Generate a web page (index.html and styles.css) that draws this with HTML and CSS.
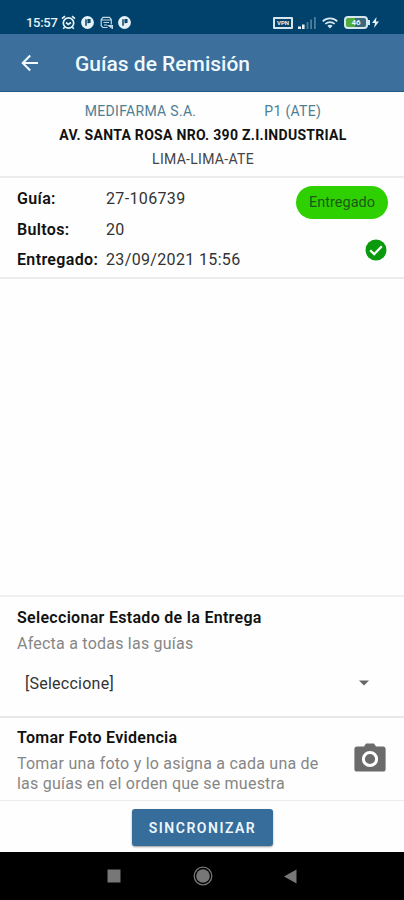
FILE: index.html
```html
<!DOCTYPE html>
<html lang="es">
<head>
    <meta charset="UTF-8">
    <meta name="viewport" content="width=device-width, initial-scale=1">
    <title>Guías de Remisión</title>
    <link rel="stylesheet" href="styles.css">
</head>
<body>
<div class="status-bar">
    <div class="status-left">
        <span class="clock">15:57</span>
        <svg class="alarm" width="15" height="15" viewBox="0 0 15 15" fill="none" stroke="#e4f1f6" stroke-width="1.7">
            <circle cx="7.5" cy="8" r="5.2"/>
            <path d="M5 7.5l2.3 2 2.7-2M1 3.6L4 1.2M14 3.6l-3-2.4M3.6 12.2l-1.4 1.6M11.4 12.2l1.4 1.6"/>
        </svg>
        <svg class="app-icon" width="13" height="13" viewBox="0 0 13 13">
            <circle cx="6.5" cy="6.5" r="6.4" fill="#e4f1f6"/>
            <path d="M5 3.2v6.6M7.2 3v4.2M7.2 3.8h1.6v2.4H7.2" fill="none" stroke="#0b4468" stroke-width="1.5"/>
        </svg>
        <svg class="sync-icon" width="13" height="13" viewBox="0 0 13 13" fill="none" stroke="#c3d8e3" stroke-width="1.2">
            <path d="M7.5 11.5H3L1.2 9.7V3.4L3 1.3h6.5l1.8 2.1v5M1.5 4h9.5M3.5 6.5h5.5M4 9h3"/>
            <path d="M8.5 9.5h4v3z" fill="#c3d8e3"/>
        </svg>
        <svg class="app-icon" width="13" height="13" viewBox="0 0 13 13">
            <circle cx="6.5" cy="6.5" r="6.4" fill="#e4f1f6"/>
            <path d="M5 3.2v6.6M7.2 3v4.2M7.2 3.8h1.6v2.4H7.2" fill="none" stroke="#0b4468" stroke-width="1.5"/>
        </svg>
    </div>
    <div class="status-right">
        <span class="vpn">VPN</span>
        <svg class="signal" width="19" height="12" viewBox="0 0 19 12">
            <path d="M0 9.5h3V12H0zM4 7.5h2.6V12H4z" fill="#e4f1f6"/>
            <path d="M8.6 5h1.8v7H8.6zM12.2 2.5H14V12h-1.8zM16 0h1.8v12H16z" fill="#4d7f9d"/>
        </svg>
        <svg class="wifi" width="16" height="12" viewBox="0 0 16 12" fill="none" stroke="#d5e6ee" stroke-width="1.7">
            <path d="M.7 4.3a10.5 10.5 0 0 1 14.6 0M3.3 7a6.8 6.8 0 0 1 9.4 0"/>
            <path d="M5.4 8.8a4 4 0 0 1 5.2 0L8 11.6z" fill="#d5e6ee" stroke="none"/>
        </svg>
        <div class="battery"><span>46</span></div>
        <svg class="bolt" width="7" height="11" viewBox="0 0 7 11">
            <path d="M4.5 0L0 6h3L2 11l5-6.5H4z" fill="#e4f1f6"/>
        </svg>
    </div>
</div>

<header>
    <svg class="back" width="18" height="18" viewBox="0 0 18 18" fill="none" stroke="#f2fafd" stroke-width="2">
        <path d="M17 9H2M9.2 1.5L1.7 9l7.5 7.5"/>
    </svg>
    <h1>Guías de Remisión</h1>
</header>

<main>
    <section class="client">
        <div class="client-name">
            <span>MEDIFARMA S.A.</span>
            <span>P1 (ATE)</span>
        </div>
        <div class="address">AV. SANTA ROSA NRO. 390 Z.I.INDUSTRIAL</div>
        <div class="district">LIMA-LIMA-ATE</div>
    </section>

    <section class="guide">
        <dl>
            <dt>Guía:</dt>
            <dd>27-106739</dd>
            <dt>Bultos:</dt>
            <dd>20</dd>
            <dt>Entregado:</dt>
            <dd>23/09/2021 15:56</dd>
        </dl>
        <div class="guide-state">
            <span class="badge">Entregado</span>
            <svg class="check" width="22" height="22" viewBox="0 0 22 22">
                <circle cx="11" cy="11" r="10.5" fill="#0a9a0c"/>
                <path d="M5.2 11.2l4 4 7.6-8" fill="none" stroke="#fff" stroke-width="2.3"/>
            </svg>
        </div>
    </section>

    <div class="space"></div>

    <section class="delivery">
        <h2>Seleccionar Estado de la Entrega</h2>
        <p>Afecta a todas las guías</p>
        <div class="select">
            <span>[Seleccione]</span>
            <svg width="10" height="6" viewBox="0 0 10 6"><path d="M0 .5h10L5 5.5z" fill="#666"/></svg>
        </div>
    </section>

    <section class="photo">
        <div class="photo-text">
            <h2>Tomar Foto Evidencia</h2>
            <p>Tomar una foto y lo asigna a cada una de<br>las guías en el orden que se muestra</p>
        </div>
        <svg class="camera" width="32" height="29" viewBox="0 0 32 29">
            <path d="M3 3.5h7L12 .5h8l2 3h7a2.6 2.6 0 0 1 2.6 2.6v19.8a2.6 2.6 0 0 1-2.6 2.6H3A2.6 2.6 0 0 1 .4 25.9V6.1A2.6 2.6 0 0 1 3 3.5z" fill="#6b6b6b"/>
            <circle cx="16" cy="16" r="6.6" fill="#6b6b6b" stroke="#fff" stroke-width="3"/>
        </svg>
    </section>

    <section class="actions">
        <button>SINCRONIZAR</button>
    </section>
</main>

<nav>
    <svg width="14" height="14" viewBox="0 0 14 14"><path d="M.5.5h13v13H.5z" fill="#777"/></svg>
    <svg width="20" height="20" viewBox="0 0 20 20">
        <circle cx="10" cy="10" r="8.8" fill="none" stroke="#777" stroke-width="1.3"/>
        <circle cx="10" cy="10" r="6.8" fill="#777"/>
    </svg>
    <svg width="13" height="15" viewBox="0 0 13 15"><path d="M0 7.5L12.5.5v14z" fill="#777"/></svg>
</nav>
</body>
</html>
```
FILE: styles.css
```css
body {
    font-family: Roboto, "Liberation Sans", sans-serif;
    margin: 0;
    height: 900px;
    display: flex;
    flex-direction: column;
    background-color: #fefefe;
    color: #111;
}

svg {
    flex: none;
    display: block;
}

.status-bar {
    box-sizing: border-box;
    height: 34px;
    padding: 11px 25px 0 26px;
    background-color: #00426b;
    color: #e4f1f6;
    display: flex;
    justify-content: space-between;
}

.status-left,
.status-right {
    display: flex;
    align-items: center;
    height: 23px;
}

.clock {
    font-size: 13px;
    font-weight: 500;
    letter-spacing: -0.3px;
    width: 35px;
    white-space: nowrap;
}

.app-icon {
    margin-left: 5px;
}

.sync-icon {
    margin-left: 6px;
}

.vpn {
    box-sizing: border-box;
    width: 20px;
    height: 12px;
    border: 2px solid #d5e6ee;
    border-radius: 1px;
    font-size: 6px;
    font-weight: 700;
    line-height: 8px;
    text-align: center;
}

.signal {
    margin-left: 5px;
}

.wifi {
    margin-left: 5px;
}

.battery {
    box-sizing: border-box;
    position: relative;
    width: 24px;
    height: 13px;
    margin-left: 6px;
    border: 2px solid #d5e6ee;
    border-radius: 4px;
    background: linear-gradient(to right, #4faa3f 45%, #386a7c 45%);
    font-size: 8px;
    font-weight: 700;
    line-height: 9px;
    text-align: center;
}

.battery::after {
    content: "";
    position: absolute;
    right: -4px;
    top: 2px;
    width: 2px;
    height: 5px;
    background-color: #d5e6ee;
}

.bolt {
    margin-left: 4px;
}

header {
    box-sizing: border-box;
    height: 58px;
    padding-left: 21px;
    background-color: #3c6f9c;
    border-bottom: 1px solid #24598a;
    display: flex;
    align-items: center;
}

h1 {
    margin: 2px 0 0 36px;
    font-size: 21px;
    font-weight: 500;
    color: #eff9fc;
}

main {
    flex: 1;
    display: flex;
    flex-direction: column;
}

section {
    box-sizing: border-box;
}

.client {
    height: 86px;
    padding: 7px 0 0 2px;
    border-bottom: 2px solid #ececec;
    text-align: center;
    font-size: 14px;
    line-height: 24px;
    letter-spacing: 0.3px;
}

.client-name {
    display: flex;
    justify-content: center;
    gap: 68px;
    color: #4f7d92;
}

.address {
    font-weight: 700;
}

.district {
    color: #444;
}

.guide {
    height: 101px;
    padding: 6px 16px 0 17px;
    border-bottom: 2px solid #ececec;
    display: flex;
    justify-content: space-between;
}

dl {
    margin: 0;
    display: grid;
    grid-template-columns: 89px auto;
    grid-auto-rows: 30.5px;
    line-height: 30px;
    font-size: 16px;
    letter-spacing: 0.35px;
    white-space: nowrap;
}

dt {
    font-weight: 600;
}

dd {
    margin: 0;
    color: #333;
}

.guide-state {
    display: flex;
    flex-direction: column;
    align-items: flex-end;
    padding-top: 2px;
}

.badge {
    width: 92px;
    height: 33px;
    border-radius: 17px;
    background-color: #2fd000;
    color: #1c5a16;
    font-size: 14.5px;
    line-height: 33px;
    text-align: center;
}

.check {
    margin: 20px 1px 0 0;
}

.space {
    flex: 1;
}

.delivery {
    height: 121px;
    padding: 10px 17px 0;
    border-top: 2px solid #f0f0f0;
}

h2 {
    margin: 0;
    font-size: 16px;
    font-weight: 600;
    line-height: 22px;
    letter-spacing: 0.3px;
    white-space: nowrap;
}

p {
    margin: 0;
    font-size: 16px;
    line-height: 20px;
    letter-spacing: 0.23px;
    color: #868686;
    white-space: nowrap;
}

.delivery p {
    margin-top: 5px;
}

.select {
    display: flex;
    justify-content: space-between;
    align-items: center;
    height: 24px;
    margin-top: 17px;
    padding: 0 18px 0 8px;
    font-size: 16px;
    letter-spacing: 0.25px;
    color: #333;
}

.photo {
    height: 84px;
    padding: 9px 18px 0 17px;
    border-top: 2px solid #e8e8e8;
    display: flex;
    justify-content: space-between;
}

.photo p {
    margin-top: 5px;
}

.camera {
    margin-top: 16px;
}

.actions {
    height: 52px;
    padding-top: 8px;
    border-top: 1px solid #ebebeb;
    text-align: center;
}

button {
    width: 141px;
    height: 37px;
    margin-left: 1px;
    padding: 0;
    border: none;
    border-radius: 3px;
    background-color: #376d9b;
    box-shadow: 0 1px 2px rgba(0, 0, 0, 0.4);
    color: #edf7fc;
    font-family: inherit;
    font-size: 14px;
    font-weight: 600;
    letter-spacing: 1.5px;
}

nav {
    box-sizing: border-box;
    height: 48px;
    padding: 0 107px;
    background-color: #000;
    display: flex;
    align-items: center;
    justify-content: space-between;
}
```
